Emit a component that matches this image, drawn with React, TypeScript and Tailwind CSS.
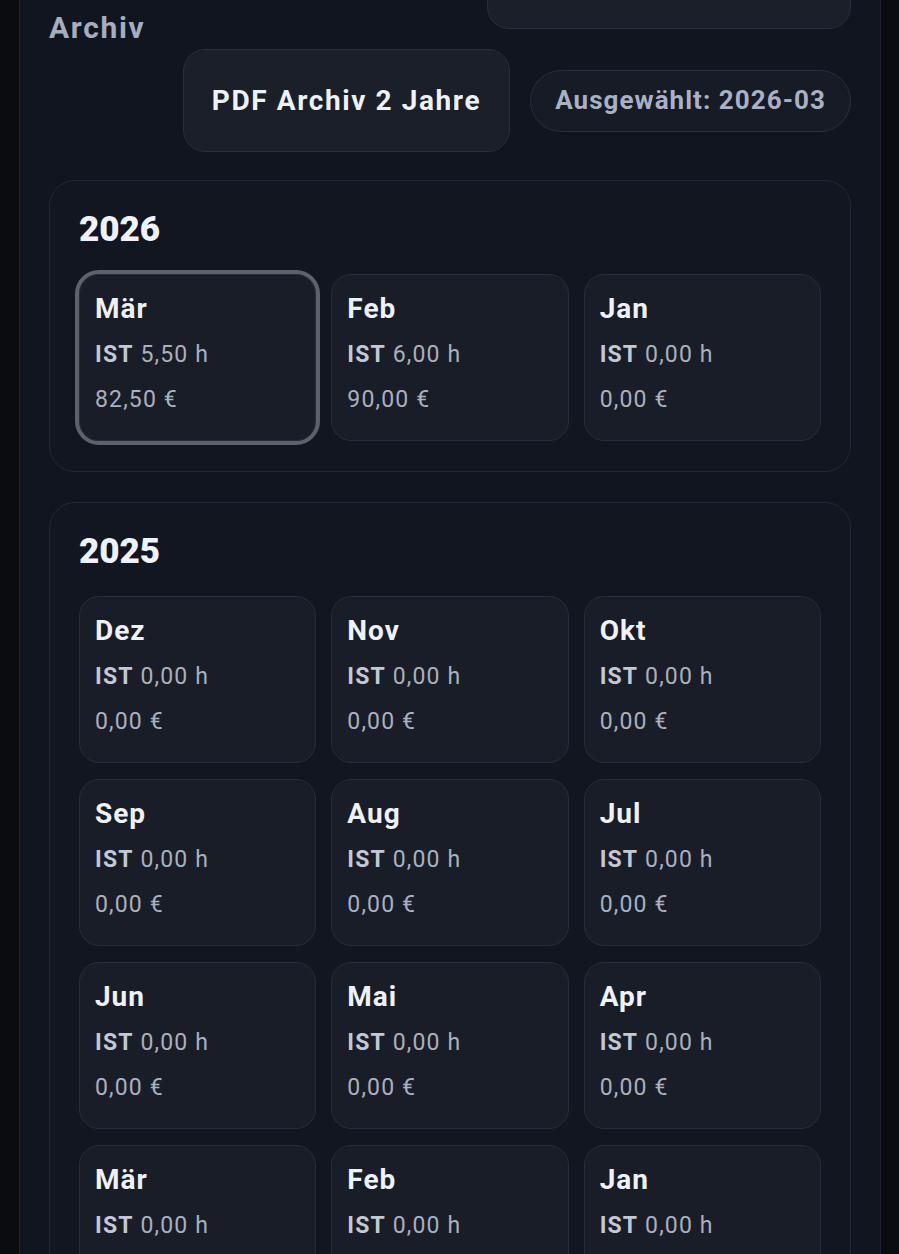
import React from "react";

type Month = { name: string; hours: string; amount: string; selected?: boolean };

const years: { year: string; months: Month[] }[] = [
  {
    year: "2026",
    months: [
      { name: "Mär", hours: "5,50 h", amount: "82,50 €", selected: true },
      { name: "Feb", hours: "6,00 h", amount: "90,00 €" },
      { name: "Jan", hours: "0,00 h", amount: "0,00 €" },
    ],
  },
  {
    year: "2025",
    months: [
      "Dez", "Nov", "Okt", "Sep", "Aug", "Jul", "Jun", "Mai", "Apr", "Mär", "Feb", "Jan",
    ].map((name) => ({ name, hours: "0,00 h", amount: "0,00 €" })),
  },
];

function MonthCard({ month }: { month: Month }) {
  return (
    <button
      className={
        "flex flex-col gap-[13px] rounded-[20px] border border-[#262d3a] bg-[#181d27] px-[15px] pt-[17px] pb-[24px] text-left " +
        (month.selected ? "outline-[4px] outline-solid outline-[#5c626c]" : "")
      }
    >
      <span className="text-[28px] leading-[34px] font-bold tracking-[0.035em] text-[#eef1f8]">
        {month.name}
      </span>
      <span className="text-[23px] leading-[32px] tracking-[0.05em] text-[#a9b0be]">
        <span className="font-bold text-[#c3c9d4]">IST</span> {month.hours}
      </span>
      <span className="text-[23px] leading-[32px] tracking-[0.05em] text-[#a9b0be]">{month.amount}</span>
    </button>
  );
}

export default function App() {
  return (
    <div
      className="h-[1254px] w-full overflow-hidden bg-[#0a0c10]"
      style={{ fontFamily: "Roboto, 'Noto Sans', sans-serif" }}
    >
      <div className="mx-[19px] mt-[-72px] w-[862px] rounded-[28px] border border-[#1d2430] bg-[#10151f] px-[29px] pt-[20px] pb-[40px]">
        <div className="flex items-start justify-between">
          <h2 className="mt-[61px] text-[30px] leading-[36px] font-bold tracking-[0.055em] text-[#a5adbf]">
            Archiv
          </h2>
          <div className="flex w-[668px] flex-wrap items-center justify-end gap-[20px]">
            <button className="h-[80px] w-[364px] rounded-[22px] border border-[#272e3c] bg-[#1a1f29]" />
            <button className="h-[103px] w-[327px] rounded-[22px] border border-[#272e3c] bg-[#1a1f29] text-[28px] font-bold tracking-[0.057em] text-[#eef1f8]">
              PDF Archiv 2 Jahre
            </button>
            <div className="flex h-[62px] w-[321px] items-center justify-center rounded-full border border-[#272e3c] bg-[#161b25] text-[26px] font-bold tracking-[0.04em] text-[#a9b1c5]">
              Ausgewählt: 2026-03
            </div>
          </div>
        </div>

        <div className="mt-[28px] flex flex-col gap-[30px]">
          {years.map((y) => (
            <section
              key={y.year}
              className="rounded-[26px] border border-[#222936] bg-[#111620] px-[29px] pt-[28px] pb-[30px]"
            >
              <h3 className="text-[35px] leading-[42px] font-black text-[#eef2fa]">{y.year}</h3>
              <div className="mt-[23px] grid grid-cols-3 gap-x-[15px] gap-y-[16px]">
                {y.months.map((m, i) => (
                  <MonthCard key={i} month={m} />
                ))}
              </div>
            </section>
          ))}
        </div>
      </div>
    </div>
  );
}
